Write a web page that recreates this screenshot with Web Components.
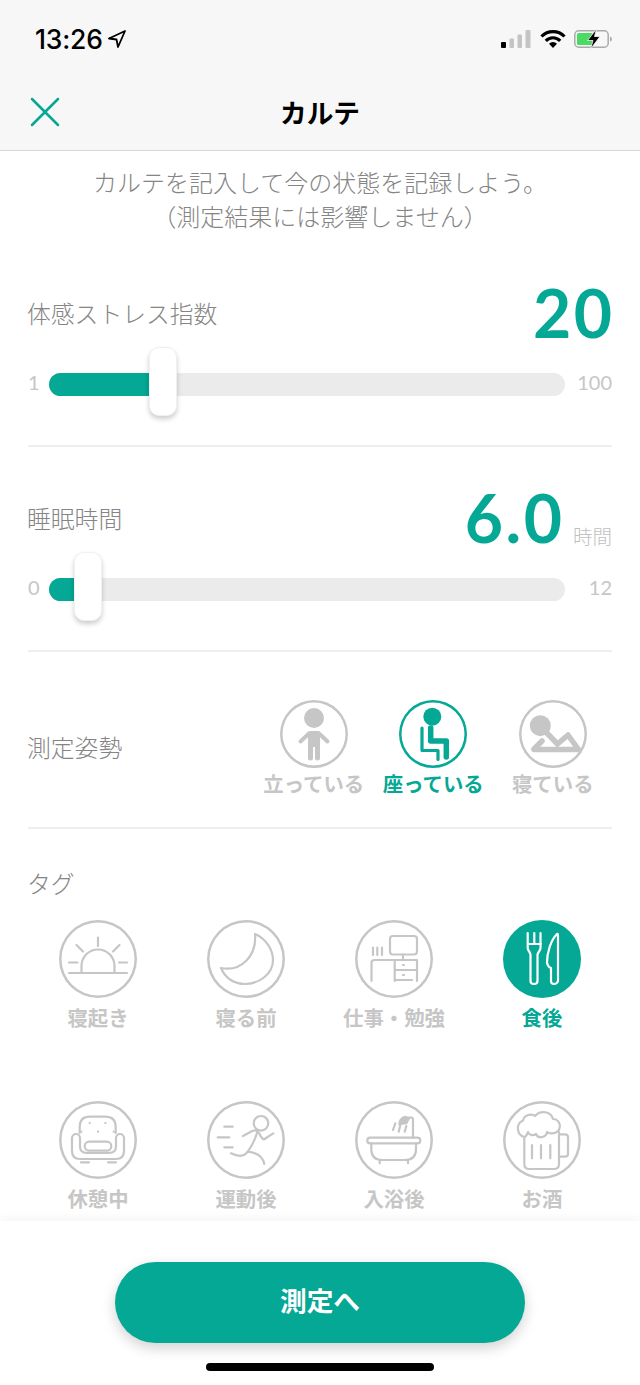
<!DOCTYPE html>
<html lang="ja">
<head>
<meta charset="utf-8">
<title>カルテ</title>
<style>
html, body { margin: 0; padding: 0; background: #fff; }
body {
  width: 640px;
  height: 1385px;
  overflow: hidden;
  display: flex;
  flex-direction: column;
  font-family: "Noto Sans CJK JP", "Noto Sans", sans-serif;
}
</style>
</head>
<body>

<app-header title="カルテ"></app-header>

<form-body>
  <range-row label="体感ストレス指数" value="20" min="1" max="100" percent="22"></range-row>
  <range-row label="睡眠時間" value="6.0" unit="時間" min="0" max="12" percent="7.6"></range-row>

  <posture-section label="測定姿勢">
    <pick-option size="68" text="立っている">
      <svg viewBox="0 0 68 68" fill="none" stroke="currentColor" stroke-linecap="round" stroke-linejoin="round">
        <circle cx="34" cy="18" r="10" fill="currentColor" stroke="none"/>
        <path d="M20.500 41.500l9-8.500h9l9 8.500" stroke-width="4"/>
        <path d="M29 33h10v13h-10z" fill="currentColor" stroke-width="2"/>
        <path d="M30.500 44v14M37.500 44v14" stroke-width="5"/>
      </svg>
    </pick-option>
    <pick-option size="68" text="座っている" active>
      <svg viewBox="0 0 68 68" fill="none" stroke="currentColor" stroke-linecap="round" stroke-linejoin="round">
        <circle cx="33.300" cy="16.700" r="9" fill="currentColor" stroke="none"/>
        <path d="M23 28v22.500h16v9" stroke-width="3.200"/>
        <path d="M31.700 28v13h15.600v16" stroke-width="5.500"/>
      </svg>
    </pick-option>
    <pick-option size="68" text="寝ている">
      <svg viewBox="0 0 68 68" fill="none" stroke="currentColor" stroke-linecap="round" stroke-linejoin="round">
        <circle cx="21.300" cy="25.700" r="10.500" fill="currentColor" stroke="none"/>
        <path d="M15 49.500h44.500L49 35 38.500 44 25 30M15 49l8-8" stroke-width="5.500"/>
      </svg>
    </pick-option>
  </posture-section>

  <tag-section label="タグ">
    <pick-option size="78" text="寝起き">
      <svg viewBox="0 0 78 78" fill="none" stroke="currentColor" stroke-width="2.200" stroke-linecap="round" stroke-linejoin="round">
        <path d="M10 53h58M22.500 53v-7a16.500 16.500 0 0 1 33 0v7"/>
        <path d="M39 17.500V26M17.500 25l6.500 6.500M60.500 25L54 31.500M10 42.500h8.500M60 42.500h8"/>
      </svg>
    </pick-option>
    <pick-option size="78" text="寝る前">
      <svg viewBox="0 0 78 78" fill="none" stroke="currentColor" stroke-width="2.200" stroke-linecap="round" stroke-linejoin="round">
        <path d="M48 14c10 4 18 15 18 26 0 14-14 24-28 24-11 0-20-6-24-16 20 4 36-12 34-34z"/>
      </svg>
    </pick-option>
    <pick-option size="78" text="仕事・勉強">
      <svg viewBox="0 0 78 78" fill="none" stroke="currentColor" stroke-width="2.200" stroke-linecap="round" stroke-linejoin="round">
        <rect x="35" y="16" width="27" height="18.500" rx="3"/>
        <path d="M48 34.500V40M16.500 61V43q0-3 3-3H62v21M39.700 40v21M39.700 50H62M39.700 60H57M48 45h1M48 55h1M18 27.500V35M22.300 27.500V35M27 27.500V35"/>
      </svg>
    </pick-option>
    <pick-option size="78" text="食後" filled>
      <svg viewBox="0 0 78 78" fill="none" stroke="currentColor" stroke-width="2.200" stroke-linecap="round" stroke-linejoin="round">
        <path d="M24.700 13v15c0 3 2.800 4 2.800 7v26q0 3 3.500 3t3.500-3V35c0-3 3-4 3-7V13M31.300 13v11M24.700 24H38"/>
        <path d="M54 14c-6 6-10 18-10 29q1 4 4 5v13q0 3 3 3t4-3V16q0-3-1-2z"/>
      </svg>
    </pick-option>
    <pick-option size="78" text="休憩中">
      <svg viewBox="0 0 78 78" fill="none" stroke="currentColor" stroke-width="2.200" stroke-linecap="round" stroke-linejoin="round">
        <path d="M20.700 32v-6q0-10.300 10.300-10.300h15q10.700 0 10.700 10.300v6"/>
        <path d="M21 37a4 4 0 0 0-8 0v13q0 8 8 8h36q8 0 8-8V37a4 4 0 0 0-8 0v8q0 7-7 7H28q-7 0-7-7z"/>
        <rect x="25.700" y="40.700" width="26.600" height="9" rx="4.500"/>
        <path d="M22 61.300h8M49 61.300h8"/>
        <path d="M30.700 22h.1M46.300 22h.1M22.300 30.700h.1M39 30.700h.1M54.700 30.700h.1"/>
      </svg>
    </pick-option>
    <pick-option size="78" text="運動後">
      <svg viewBox="0 0 78 78" fill="none" stroke="currentColor" stroke-width="2.200" stroke-linecap="round" stroke-linejoin="round">
        <circle cx="54" cy="22.300" r="7.300"/>
        <path d="M36 35l9.700-5.300q4-1.500 6.300 2.300 4 9 7 5l7.300-4.700"/>
        <path d="M50 32q-3 10-9.300 18.700-4.700 7.300-16.700 1.600M40.700 50.700Q55 52 57.300 63"/>
        <path d="M17.300 25.700h8.400M10.700 36.300h11.600M17.300 46.300h8.400"/>
      </svg>
    </pick-option>
    <pick-option size="78" text="入浴後">
      <svg viewBox="0 0 78 78" fill="none" stroke="currentColor" stroke-width="2.200" stroke-linecap="round" stroke-linejoin="round">
        <rect x="12.300" y="36.700" width="53" height="5.600" rx="2.800"/>
        <path d="M16.300 42.300v6q0 10.700 10.700 10.700h23q11 0 11-10.700v-6M24.700 59v3.300M53 59v3.300"/>
        <path d="M58 36.700V18.500q0-2-2-2h-3"/>
        <path d="M44 23.500q0-6 6-8l4.500 1.500-3 5.500z" fill="currentColor" stroke-width="1.600"/>
        <path d="M38 29l2.300-6.700M43.700 30.700l1.600-6.700M49.700 30.700l1.600-5.700"/>
      </svg>
    </pick-option>
    <pick-option size="78" text="お酒">
      <svg viewBox="0 0 78 78" fill="none" stroke="currentColor" stroke-width="2.200" stroke-linecap="round" stroke-linejoin="round">
        <path d="M21.300 36c-7.300-2-9.300-13-1.300-16.500 1-5.500 9-7.500 12-4.500 5-6 16-5 18 3 6 0 9 7 5 12-3 3-9 3-11 1-1 6-9 7-11 2-3 2-7 1-8-2-1 3-3 5-3.700 5z"/>
        <path d="M21.300 36v27q0 5 5 5h24.700q5 0 5-5V31"/>
        <path d="M56 33.300h6q3 0 3 3v16.400q0 3-3 3h-6M29 44v13.300M38 44v13.300M47.300 44v13.300"/>
      </svg>
    </pick-option>
  </tag-section>
</form-body>

<app-footer action="測定へ"></app-footer>

<script>
const TEAL = '#05a795';

class StatusBar extends HTMLElement {
    connectedCallback() {
        const root = this.attachShadow({ mode: 'open' });
        root.innerHTML = `
<style>
:host { display: flex; align-items: center; height: 78px; padding: 0 28px 0 35px; color: #000; }
.time { font: 500 26.500px/1 Inter, "Liberation Sans", sans-serif; letter-spacing: -.2px; }
.loc { width: 18px; height: 18px; margin: 0 0 0 5px; }
.right { margin-left: auto; display: flex; align-items: center; }
.signal { width: 30px; height: 18px; margin-right: 9px; }
.wifi { width: 26px; height: 18px; margin-right: 8px; }
.batt { width: 38px; height: 20px; }
</style>
<span class="time">13:26</span>
<svg class="loc" viewBox="0 0 18 18" fill="none" stroke="#000" stroke-width="1.800" stroke-linejoin="round"><path d="M17 1L1 8.500l7.500 1L10 17z"/></svg>
<div class="right">
  <svg class="signal" viewBox="0 0 30 18">
    <rect x="0" y="12" width="5" height="6" rx="1" fill="#000"/>
    <rect x="8.500" y="8.500" width="4.500" height="9.500" rx="1" fill="#c4c4c4"/>
    <rect x="16.500" y="4.500" width="4.500" height="13.500" rx="1" fill="#c4c4c4"/>
    <rect x="24.500" y="0" width="5" height="18" rx="1" fill="#c4c4c4"/>
  </svg>
  <svg class="wifi" viewBox="0 0 26 18" fill="none" stroke="#000" stroke-width="3.200">
    <path d="M1.500 6.500a16 16 0 0 1 23 0M5.800 10.800a10 10 0 0 1 14.400 0"/>
    <path d="M13 18l-4-4.200a5.500 5.500 0 0 1 8 0z" fill="#000" stroke="none"/>
  </svg>
  <svg class="batt" viewBox="0 0 38 20">
    <rect x=".8" y="1.800" width="33.400" height="16.400" rx="4" fill="none" stroke="#aaa" stroke-width="1.500"/>
    <rect x="3" y="4" width="16" height="12" rx="1.500" fill="#4cd964"/>
    <path d="M36 7.500q2 .5 2 2.500t-2 2.500z" fill="#aaa"/>
    <path d="M22.500 0l-9 11.500h5.500L16.500 20l9.500-12.500H20.500z" fill="#000" stroke="#f7f7f7" stroke-width=".8"/>
  </svg>
</div>`;
    }
}
customElements.define('status-bar', StatusBar);

class AppHeader extends HTMLElement {
    connectedCallback() {
        const root = this.attachShadow({ mode: 'open' });
        root.innerHTML = `
<style>
:host { display: block; flex: none; background: #f7f7f7; border-bottom: 1px solid #d6d6d6; }
.nav { display: grid; grid-template-columns: 1fr auto 1fr; align-items: center; height: 68px; padding: 0 30px 4px; }
h1 { margin: 0; font: 700 26.700px/1 "Noto Sans CJK JP", sans-serif; color: #000; }
svg { width: 30px; height: 30px; display: block; }
</style>
<status-bar></status-bar>
<div class="nav">
  <svg viewBox="0 0 30 30" fill="none" stroke="${TEAL}" stroke-width="2.500" stroke-linecap="round"><path d="M2 2l26 26M28 2L2 28"/></svg>
  <h1></h1>
</div>`;
        root.querySelector('h1').textContent = this.getAttribute('title');
    }
}
customElements.define('app-header', AppHeader);

class FormBody extends HTMLElement {
    connectedCallback() {
        const root = this.attachShadow({ mode: 'open' });
        root.innerHTML = `
<style>
:host { display: block; flex: 1; min-height: 0; overflow: hidden; padding: 0 28px; }
.intro { margin: 0 -10px; padding: 14px 0 9px; text-align: center; font-size: 24px; font-weight: 300; line-height: 34px; color: #858585; }
</style>
<p class="intro">カルテを記入して今の状態を記録しよう。<br>（測定結果には影響しません）</p>
<slot></slot>`;
    }
}
customElements.define('form-body', FormBody);

class RangeRow extends HTMLElement {
    connectedCallback() {
        const percent = this.getAttribute('percent');
        const unit = this.getAttribute('unit');
        const root = this.attachShadow({ mode: 'open' });
        root.innerHTML = `
<style>
:host { display: block; padding: 42px 0 26px; border-bottom: 2px solid #eee; }
.head { display: flex; align-items: center; height: 60px; margin-bottom: 6px; }
.label { margin: -4px 0 0 -1px; font-size: 23.800px; font-weight: 300; color: #858585; }
.value { margin-left: auto; padding-bottom: 2px; font: 700 66px/58px Lato, sans-serif; color: ${TEAL}; letter-spacing: 2.500px; }
.unit { align-self: flex-end; margin: 0 0 -1px 8.500px; font-size: 19.500px; font-weight: 300; line-height: 28px; color: #c0c0c0; }
.slider { display: grid; grid-template-columns: 21px 1fr 47px; align-items: center; height: 69px; font: 400 20px/1 Lato, sans-serif; color: #c6c6c6; }
.slider span { padding-bottom: 6px; }
.max { text-align: right; }
.track { position: relative; height: 23px; border-radius: 12px; background: #ebebeb; }
.fill { height: 100%; border-radius: 12px 0 0 12px; background: ${TEAL}; width: ${percent}%; }
.thumb { position: absolute; top: -26px; left: ${percent}%; width: 28px; height: 69px; margin-left: -14px; box-sizing: border-box; background: #fff; border: 1px solid #f0f0f0; border-radius: 10px; box-shadow: 0 3px 5px rgba(0,0,0,.2); }
</style>
<div class="head">
  <span class="label">${this.getAttribute('label')}</span>
  <span class="value"${unit ? '' : ' style="margin-right:-2.5px"'}>${this.getAttribute('value')}</span>
  ${unit ? `<span class="unit">${unit}</span>` : ''}
</div>
<div class="slider">
  <span>${this.getAttribute('min')}</span>
  <div class="track"><div class="fill"></div><div class="thumb"></div></div>
  <span class="max">${this.getAttribute('max')}</span>
</div>`;
    }
}
customElements.define('range-row', RangeRow);

class PostureSection extends HTMLElement {
    connectedCallback() {
        const root = this.attachShadow({ mode: 'open' });
        root.innerHTML = `
<style>
:host { display: flex; align-items: center; justify-content: space-between; padding: 48px 0 31px; border-bottom: 2px solid #eee; }
.label { margin: -4px 0 0 -1px; font-size: 23.800px; font-weight: 300; color: #858585; }
.options { display: grid; grid-template-columns: repeat(3, 119.500px); margin-right: -.5px; }
</style>
<span class="label">${this.getAttribute('label')}</span>
<div class="options"><slot></slot></div>`;
    }
}
customElements.define('posture-section', PostureSection);

class TagSection extends HTMLElement {
    connectedCallback() {
        const root = this.attachShadow({ mode: 'open' });
        root.innerHTML = `
<style>
:host { display: block; padding-top: 38px; }
.label { display: block; margin: 0 0 19px -1px; font-size: 23.800px; font-weight: 300; line-height: 32px; padding-bottom: 2px; color: #858585; }
.grid { display: grid; grid-template-columns: repeat(4, 148px); row-gap: 71px; margin: 0 -4px; }
</style>
<span class="label">${this.getAttribute('label')}</span>
<div class="grid"><slot></slot></div>`;
    }
}
customElements.define('tag-section', TagSection);

class PickOption extends HTMLElement {
    connectedCallback() {
        const size = this.getAttribute('size');
        const root = this.attachShadow({ mode: 'open' });
        root.innerHTML = `
<style>
:host { display: flex; flex-direction: column; align-items: center; color: #c6c6c6; }
:host([active]), :host([filled]) { color: ${TEAL}; }
.icon { width: ${size}px; height: ${size}px; border-radius: 50%; box-shadow: inset 0 0 0 2.500px currentColor; }
:host([filled]) .icon { background: ${TEAL}; box-shadow: none; color: #fff; }
::slotted(svg) { display: block; width: 100%; height: 100%; }
.text { margin-top: ${size === '78' ? 7 : 3}px; padding-bottom: 1px; font-size: 20.400px; font-weight: 700; line-height: 24px; white-space: nowrap; }
</style>
<div class="icon"><slot></slot></div>
<span class="text">${this.getAttribute('text')}</span>`;
    }
}
customElements.define('pick-option', PickOption);

class AppFooter extends HTMLElement {
    connectedCallback() {
        const root = this.attachShadow({ mode: 'open' });
        root.innerHTML = `
<style>
:host { display: flex; flex: none; flex-direction: column; align-items: center; height: 164px; box-sizing: border-box; padding-top: 41px; background: #fff; box-shadow: 0 -3px 10px rgba(0,0,0,.04); position: relative; }
button { width: 410px; height: 81px; padding: 0 0 5px; border: 0; border-radius: 41px; background: ${TEAL}; color: #fff; font: 700 26.700px/1 "Noto Sans CJK JP", sans-serif; box-shadow: 0 5px 14px rgba(0,0,0,.18); }
.home { width: 228px; height: 8px; margin-top: 20px; border-radius: 4px; background: #000; }
</style>
<button type="button">${this.getAttribute('action')}</button>
<div class="home"></div>`;
    }
}
customElements.define('app-footer', AppFooter);
</script>
</body>
</html>
